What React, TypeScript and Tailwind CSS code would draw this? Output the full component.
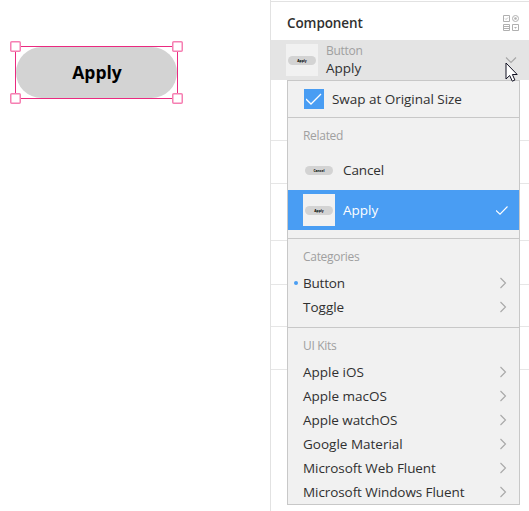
import React from "react";

const Thumb = ({ label, boxed }: { label: string; boxed?: boolean }) => (
  <div className={`flex h-8 w-8 shrink-0 items-center justify-center ${boxed ? "bg-[#f1f1f1]" : ""}`}>
    <div className="flex h-[9px] w-7 items-center justify-center rounded-full bg-[#d3d3d3] pt-px text-[3.4px] leading-none font-bold text-black">
      {label}
    </div>
  </div>
);

const Chevron = () => (
  <svg width="8" height="12" viewBox="0 0 8 12" fill="none" stroke="#a8a8a8" strokeWidth="1.1">
    <path d="M1.5 1l5 5-5 5" />
  </svg>
);

const SectionTitle = ({ children }: { children: React.ReactNode }) => (
  <div className="flex h-8 items-center pt-[4px] pl-[15px] text-[12px] tracking-[-0.3px] text-[#a0a0a0]">{children}</div>
);

const Item = ({ label, track, active }: { label: string; track: string; active?: boolean }) => (
  <div className="flex h-6 items-center pr-[12px]">
    <div className="flex w-[15px] shrink-0 items-center pl-[6px]">
      {active && <div className="h-1 w-1 rounded-full bg-[#499df3]" />}
    </div>
    <span className={`flex-1 ${track}`}>{label}</span>
    <Chevron />
  </div>
);

const Handle = ({ place }: { place: string }) => (
  <svg className={`absolute ${place}`} width="11" height="11" viewBox="0 0 11 11">
    <rect x=".75" y=".75" width="9.5" height="9.5" rx="1" fill="white" stroke="#f67fb2" strokeWidth="1.5" />
  </svg>
);

const kits = [
  { label: "Apple iOS", track: "" },
  { label: "Apple macOS", track: "" },
  { label: "Apple watchOS", track: "tracking-[-0.05px]" },
  { label: "Google Material", track: "" },
  { label: "Microsoft Web Fluent", track: "tracking-[-0.07px]" },
  { label: "Microsoft Windows Fluent", track: "tracking-[-0.08px]" },
];

const ComponentsIcon = () => (
  <svg width="16" height="16" viewBox="0 0 16 16" fill="none" stroke="#b0b0b0">
    <path d="M.5 .5h6v6h-6zM.5 9.5h6v6h-6zM9.5 9.5h6v6h-6z" />
    <path d="M2 3.5l1 1 2-2" strokeWidth=".8" />
    <path d="M1 11.5h5M1 13.5h5" />
    <path d="M11 12h3l-1.5 1.8z" fill="#b0b0b0" stroke="none" />
    <circle cx="12.5" cy="3.5" r="3" />
    <circle cx="12.5" cy="3.5" r="1.3" fill="#b0b0b0" stroke="none" />
  </svg>
);

export default function App() {
  return (
    <div className="flex h-[511px] w-[529px] overflow-hidden bg-white font-['Open_Sans','Noto_Sans',sans-serif] text-[13.5px] leading-5 text-[#303030]">
      <main className="w-[270px] shrink-0 pt-[46px] pl-[15px]">
        <div className="relative flex h-[53px] w-[163px] items-center justify-center border border-[#ea2a80]">
          <div className="flex h-full w-full items-center justify-center rounded-full bg-[#d3d3d3] pb-px pl-px text-[17.5px] font-bold text-black">
            Apply
          </div>
          <Handle place="-top-[6px] -left-[6px]" />
          <Handle place="-top-[6px] -right-[6px]" />
          <Handle place="-bottom-[6px] -left-[6px]" />
          <Handle place="-bottom-[6px] -right-[6px]" />
        </div>
      </main>

      <aside className="relative w-[259px] shrink-0 border-l border-[#e2e2e2]">
        <div className="mt-px flex h-[39px] items-center justify-between border-t border-[#e2e2e2] pt-[4px] pr-[10px] pl-4">
          <span className="text-[13.5px] font-semibold tracking-[-0.1px]">Component</span>
          <ComponentsIcon />
        </div>
        <div className="flex h-10 items-center bg-[#e4e4e4] pr-[12px] pl-[15px]">
          <Thumb label="Apply" boxed />
          <div className="ml-2 flex flex-1 flex-col pb-px">
            <span className="h-[18px] text-[12px] leading-[18px] tracking-[-0.3px] text-[#a0a0a0]">Button</span>
            <span className="h-[17px] leading-[17px]">Apply</span>
          </div>
          <svg width="12" height="8" viewBox="0 0 12 8" fill="none" stroke="#a8a8a8" strokeWidth="1.2">
            <path d="M1 1.5l5 5 5-5" />
          </svg>
        </div>
        <div className="h-[61px] border-b border-[#e6e6e6]" />
        <div className="h-[43px] border-b border-[#e6e6e6]" />
        <div className="h-[57px] border-b border-[#e6e6e6]" />
        <div className="h-11 border-b border-[#e6e6e6]" />
        <div className="h-[42px] border-b border-[#e6e6e6]" />
        <div className="h-[43px] border-b border-[#e6e6e6]" />

        <div className="absolute top-[80px] left-4 w-[233px] border border-[#c8c8c8] bg-[#f1f1f1]">
          <div className="flex h-[37px] items-center border-b border-[#c8c8c8] pl-4">
            <div className="flex h-5 w-5 items-center justify-center bg-[#499df3]">
              <svg width="16" height="12" viewBox="0 0 16 12" fill="none" stroke="white" strokeWidth="1.3">
                <path d="M0 6l5 5L15 1" />
              </svg>
            </div>
            <span className="ml-2 tracking-[-0.03px]">Swap at Original Size</span>
          </div>
          <div className="border-b border-[#c8c8c8] pb-2">
            <SectionTitle>Related</SectionTitle>
            <div className="flex h-10 items-center pl-[15px]">
              <Thumb label="Cancel" />
              <span className="ml-2 tracking-[-0.1px]">Cancel</span>
            </div>
            <div className="flex h-10 items-center bg-[#499df3] pr-[11px] pl-[15px] text-white">
              <Thumb label="Apply" boxed />
              <span className="ml-2 flex-1">Apply</span>
              <svg width="12" height="9" viewBox="0 0 12 9" fill="none" stroke="white" strokeWidth="1.1">
                <path d="M0 4.5L4 8.2 11.5 .5" />
              </svg>
            </div>
          </div>
          <div className="border-b border-[#c8c8c8] pb-2">
            <SectionTitle>Categories</SectionTitle>
            <Item label="Button" track="tracking-[-0.2px]" active />
            <Item label="Toggle" track="" />
          </div>
          <div>
            <SectionTitle>UI Kits</SectionTitle>
            {kits.map((k) => (
              <Item key={k.label} {...k} />
            ))}
          </div>
        </div>

        <svg className="absolute top-[62px] left-[234px]" width="13" height="21" viewBox="0 0 13 21">
          <path d="M1 1v16l3.7-3.5 2.6 5.7 2.6-1.2-2.5-5.5h4.8z" fill="white" stroke="#111122" strokeWidth="1" />
        </svg>
      </aside>
    </div>
  );
}
